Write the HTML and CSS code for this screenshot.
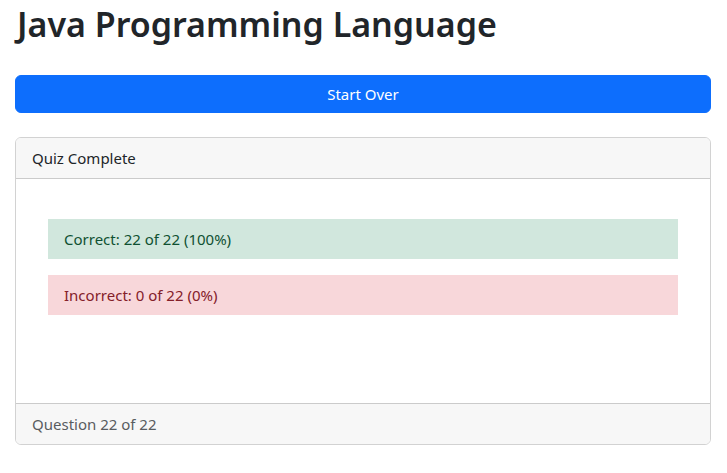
FILE: index.html
```html
<!DOCTYPE html>
<html lang="en">
<head>
<meta charset="utf-8">
<title>Java Programming Language</title>
<link rel="stylesheet" href="styles.css">
</head>
<body>
<main class="page">
  <h1 class="title">Java Programming Language</h1>
  <button class="btn-start" type="button">Start Over</button>
  <section class="card">
    <header class="card-header">Quiz Complete</header>
    <div class="card-body">
      <div class="alert alert-success">Correct: 22 of 22 (100%)</div>
      <div class="alert alert-danger">Incorrect: 0 of 22 (0%)</div>
    </div>
    <footer class="card-footer">Question 22 of 22</footer>
  </section>
</main>
</body>
</html>
```
FILE: styles.css
```css
* { box-sizing: border-box; }
html, body { margin: 0; padding: 0; background: #fff; }
body {
  font-family: "Noto Sans", "Segoe UI", "Liberation Sans", sans-serif;
  font-size: 15px;
  line-height: 24px;
  color: #212529;
}
.page {
  padding: 0 16px 0 15px;
  display: flex;
  flex-direction: column;
}
.title {
  margin: 0;
  height: 51px;
  padding-top: 3px;
  padding-left: 2px;
  font-size: 34px;
  line-height: 42px;
  font-weight: 600;
  color: #212529;
}
.btn-start {
  margin-top: 24px;
  height: 38px;
  width: 100%;
  border: 1px solid #0d6efd;
  border-radius: 6px;
  background: #0d6efd;
  color: #fff;
  font-family: inherit;
  font-size: 15px;
  line-height: 24px;
  padding: 6px 12px;
}
.card {
  margin-top: 24px;
  border: 1px solid rgba(0,0,0,0.175);
  border-radius: 6px;
  display: flex;
  flex-direction: column;
  overflow: hidden;
}
.card-header {
  padding: 8px 16px;
  background: #f7f7f7;
  border-bottom: 1px solid rgba(0,0,0,0.175);
  color: #212529;
}
.card-body {
  padding: 40px 32px 88px;
  display: flex;
  flex-direction: column;
  gap: 16px;
}
.alert {
  padding: 8px 16px;
  height: 40px;
}
.alert-success { background: #d1e7dd; color: #0f5132; }
.alert-danger { background: #f8d7da; color: #842029; }
.card-footer {
  padding: 8px 16px;
  background: #f7f7f7;
  border-top: 1px solid rgba(0,0,0,0.175);
  color: #595c5f;
}
```
